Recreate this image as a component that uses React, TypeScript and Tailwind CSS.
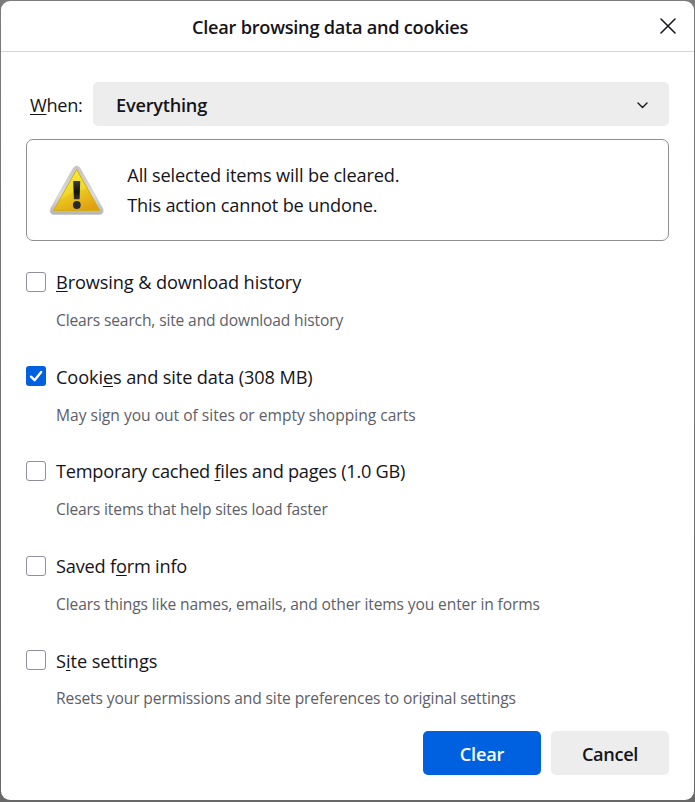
import React from "react";

type Option = {
  before: string;
  accessKey: string;
  after: string;
  hint: string;
  checked?: boolean;
  labelSpacing: string;
  hintSpacing: string;
};

const options: Option[] = [
  { before: "", accessKey: "B", after: "rowsing & download history", hint: "Clears search, site and download history", labelSpacing: "tracking-[-0.12px]", hintSpacing: "mt-4 tracking-[-0.15px]" },
  { before: "Cooki", accessKey: "e", after: "s and site data (308 MB)", hint: "May sign you out of sites or empty shopping carts", checked: true, labelSpacing: "tracking-[-0.12px]", hintSpacing: "mt-4 tracking-[-0.01px]" },
  { before: "Temporary cached ", accessKey: "f", after: "iles and pages (1.0 GB)", hint: "Clears items that help sites load faster", labelSpacing: "tracking-[-0.25px]", hintSpacing: "mt-4 tracking-[-0.14px]" },
  { before: "Saved f", accessKey: "o", after: "rm info", hint: "Clears things like names, emails, and other items you enter in forms", labelSpacing: "tracking-[-0.2px]", hintSpacing: "mt-4 tracking-[-0.13px]" },
  { before: "S", accessKey: "i", after: "te settings", hint: "Resets your permissions and site preferences to original settings", labelSpacing: "pt-[0.6px] tracking-[-0.06px]", hintSpacing: "mt-[15.4px] tracking-[-0.12px]" },
];

function AccessKey({ children }: { children: React.ReactNode }) {
  return <span className="underline decoration-1 underline-offset-2 [text-decoration-skip-ink:none]">{children}</span>;
}

function WarningIcon() {
  return (
    <svg width="56" height="52" viewBox="0 0 56 52" fill="none">
      <defs>
        <linearGradient id="rim" x1="0" y1="0" x2="0" y2="1">
          <stop offset="0" stopColor="#c4c4c4" />
          <stop offset="0.6" stopColor="#dcdcdc" />
          <stop offset="1" stopColor="#b4b4b4" />
        </linearGradient>
        <linearGradient id="face" x1="20" y1="4" x2="36" y2="46" gradientUnits="userSpaceOnUse">
          <stop offset="0" stopColor="#f4ee30" />
          <stop offset="0.5" stopColor="#eccf20" />
          <stop offset="1" stopColor="#e0a013" />
        </linearGradient>
        <linearGradient id="mark" x1="0" y1="0" x2="0" y2="1">
          <stop offset="0" stopColor="#3c3c3c" />
          <stop offset="0.6" stopColor="#111" />
          <stop offset="1" stopColor="#333" />
        </linearGradient>
      </defs>
      <path d="M24.3 4.1Q27.7.1 31 4.1L53.7 44.5Q55.6 50.1 50.3 50.5H5Q-.3 50.1 1.7 44.5Z" fill="url(#rim)" stroke="#c6c6c6" strokeWidth=".7" />
      <path d="M27.7 5.5 50.8 46.5H4.5Z" fill="url(#face)" stroke="#d2ac16" strokeWidth="1" strokeLinejoin="round" />
      <path d="M27.7 6.5 38 25Q25 25.5 10.8 36Z" fill="#fff64a" opacity=".28" />
      <path d="M24.2 17H31.2L30.6 35.2H24.9Z" fill="url(#mark)" />
      <circle cx="27.8" cy="41" r="3.9" fill="#292929" />
    </svg>
  );
}

function OptionRow({ option }: { option: Option }) {
  return (
    <div className="flex h-[94.6px] items-start gap-[10px]">
      {option.checked ? (
        <span className="-mt-[0.6px] flex size-5 shrink-0 items-center justify-center rounded-[3px] bg-[#0061e0]">
          <svg width="20" height="20" viewBox="0 0 20 20" fill="none">
            <path d="m5 10.7 3.6 3.5L15.2 6" stroke="#fff" strokeWidth="2.4" strokeLinecap="round" strokeLinejoin="round" />
          </svg>
        </span>
      ) : (
        <span className="size-5 shrink-0 rounded-[3px] border border-[#8f8f9d] bg-white" />
      )}
      <div className="-mt-px whitespace-nowrap">
        <div className={`leading-[22px] ${option.labelSpacing}`}>
          {option.before}
          <AccessKey>{option.accessKey}</AccessKey>
          {option.after}
        </div>
        <div className={`text-[15.6px] leading-[22px] text-[#5e5e66] ${option.hintSpacing}`}>{option.hint}</div>
      </div>
    </div>
  );
}

export default function App() {
  return (
    <div className="h-[802px] w-[695px] overflow-hidden bg-linear-to-b from-[#7c7c7c] to-[#686868] px-px pt-px pb-[2px] font-['Open_Sans',sans-serif] text-[18.2px] text-[#15141a]">
      <div className="flex h-[799px] flex-col rounded-[9px] bg-white">
        <header className="flex h-[51px] shrink-0 items-center border-b border-[#d7d7d7]">
          <h1 className="mt-[2px] ml-[191px] whitespace-nowrap font-semibold leading-[26px] tracking-[-0.26px]">Clear browsing data and cookies</h1>
          <svg className="mr-[18px] mb-[1px] ml-auto" width="16" height="16" viewBox="0 0 16 16" fill="none">
            <path d="m1 1 14 14M15 1 1 15" stroke="#15141a" strokeWidth="1.5" strokeLinecap="round" />
          </svg>
        </header>
        <main className="flex grow flex-col px-[25px] pt-[30px]">
          <div className="flex h-11 items-center">
            <span className="mt-[2px] w-[67px] shrink-0 whitespace-nowrap pl-1 leading-[26px] tracking-[-0.3px]">
              <AccessKey>W</AccessKey>hen:
            </span>
            <div className="flex h-11 grow items-center justify-between rounded-[5px] bg-[#ededed] pr-[21px] pl-[23px]">
              <span className="mt-[2px] font-semibold leading-[26px] tracking-[-0.24px]">Everything</span>
              <svg className="mt-[3px]" width="11" height="7" viewBox="0 0 11 7" fill="none">
                <path d="m1 1 4.5 4.5L10 1" stroke="#15141a" strokeWidth="1.4" strokeLinecap="round" strokeLinejoin="round" />
              </svg>
            </div>
          </div>
          <section className="mt-[13px] flex h-[102px] shrink-0 items-center rounded-[7px] border border-[#8f8f8f] pl-[22px]">
            <WarningIcon />
            <div className="ml-[22.3px] whitespace-nowrap leading-[30px]">
              <p className="tracking-[-0.16px]">All selected items will be cleared.</p>
              <p className="tracking-[-0.2px]">This action cannot be undone.</p>
            </div>
          </section>
          <div className="mt-[31px] h-[459px] shrink-0">
            {options.map((option) => (
              <OptionRow key={option.hint} option={option} />
            ))}
          </div>
          <footer className="flex justify-end gap-[10px]">
            <button className="h-11 w-[118px] rounded-[5px] bg-[#0061e0] pt-[3px] font-semibold tracking-[-0.2px] text-[#fbfbfe]">Clear</button>
            <button className="h-11 w-[118px] rounded-[5px] bg-[#ededed] pt-[3px] font-semibold tracking-[-0.33px]">Cancel</button>
          </footer>
        </main>
      </div>
    </div>
  );
}
